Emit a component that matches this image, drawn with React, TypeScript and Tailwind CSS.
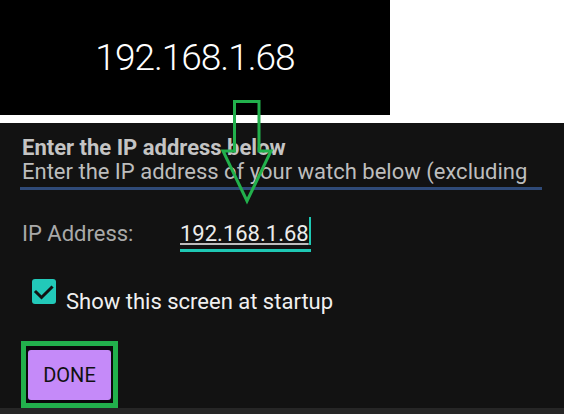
export default function App() {
  return (
    <div
      className="relative flex h-[414px] w-[564px] flex-col overflow-hidden bg-white"
      style={{ fontFamily: "Roboto, 'Liberation Sans', sans-serif" }}
    >
      {/* watch face preview */}
      <div className="flex h-[117px] w-[390px] items-center justify-center bg-black">
        <span className="text-[37px] font-light leading-none tracking-[-1px] text-white">192.168.1.68</span>
      </div>

      {/* dialog */}
      <div className="mt-[8px] flex flex-1 flex-col bg-[#121212] pl-[22px] pt-[13px]">
        <div className="text-[22px] font-bold leading-[24px] text-[#c4c4c4]">
          Enter the IP address below
        </div>
        <div className="mr-[22px] -ml-[2px] overflow-hidden whitespace-nowrap border-b-[3px] border-[#2f4a78] pb-[3px] pl-[2px] text-[22px] leading-[24px] text-[#bdbdbd]">
          Enter the IP address of your watch below (excluding
        </div>

        <div className="mt-[31px] flex items-start">
          <span className="w-[158px] text-[22px] leading-[26px] text-[#a9a9a9]">IP Address:</span>
          <div className="relative flex flex-col">
            <span className="pr-[2px] text-[22px] leading-[26px] text-[#ececec] underline decoration-[#bdbdbd] decoration-2 underline-offset-[2px]">
              192.168.1.68
            </span>
            <div className="mt-[2px] h-[3px] bg-[#1ec8b4]" />
            <div className="absolute right-[0px] top-[-4px] h-[28px] w-[2px] bg-[#1ec8b4]" />
          </div>
        </div>

        <div className="mt-[27px] flex items-start pl-[10px]">
          <div className="flex h-[25px] w-[24px] items-center justify-center rounded-[3px] bg-[#22c9b9]">
            <svg width="24" height="25" viewBox="0 0 24 25" fill="none">
              <path d="M4 13 L9.5 18.5 L19.5 8.5" stroke="#121212" strokeWidth="3" strokeLinecap="square" />
            </svg>
          </div>
          <span className="ml-[10px] mt-[10px] text-[22px] leading-[26px] text-[#f0f0f0]">
            Show this screen at startup
          </span>
        </div>

        <div className="mt-[26px] flex h-[67px] w-[97px] -ml-[1px] border-[5px] border-[#22b14c] bg-[#0a0a0a] pl-[2px] pt-[4px]">
          <button className="flex h-[50px] w-[83px] items-center justify-center rounded-[3px] bg-[#c58af9] text-[20px] font-normal text-[#111111]">
            DONE
          </button>
        </div>
      </div>
      <div className="h-[6px] bg-[#262626]" />

      {/* annotation arrow */}
      <svg className="pointer-events-none absolute left-0 top-0" width="564" height="414">
        <polygon
          points="234.5,101.5 259,101.5 259,151 271,151 247,201 223,151 234.5,151"
          fill="none"
          stroke="#22b14c"
          strokeWidth="3"
        />
      </svg>
    </div>
  );
}
